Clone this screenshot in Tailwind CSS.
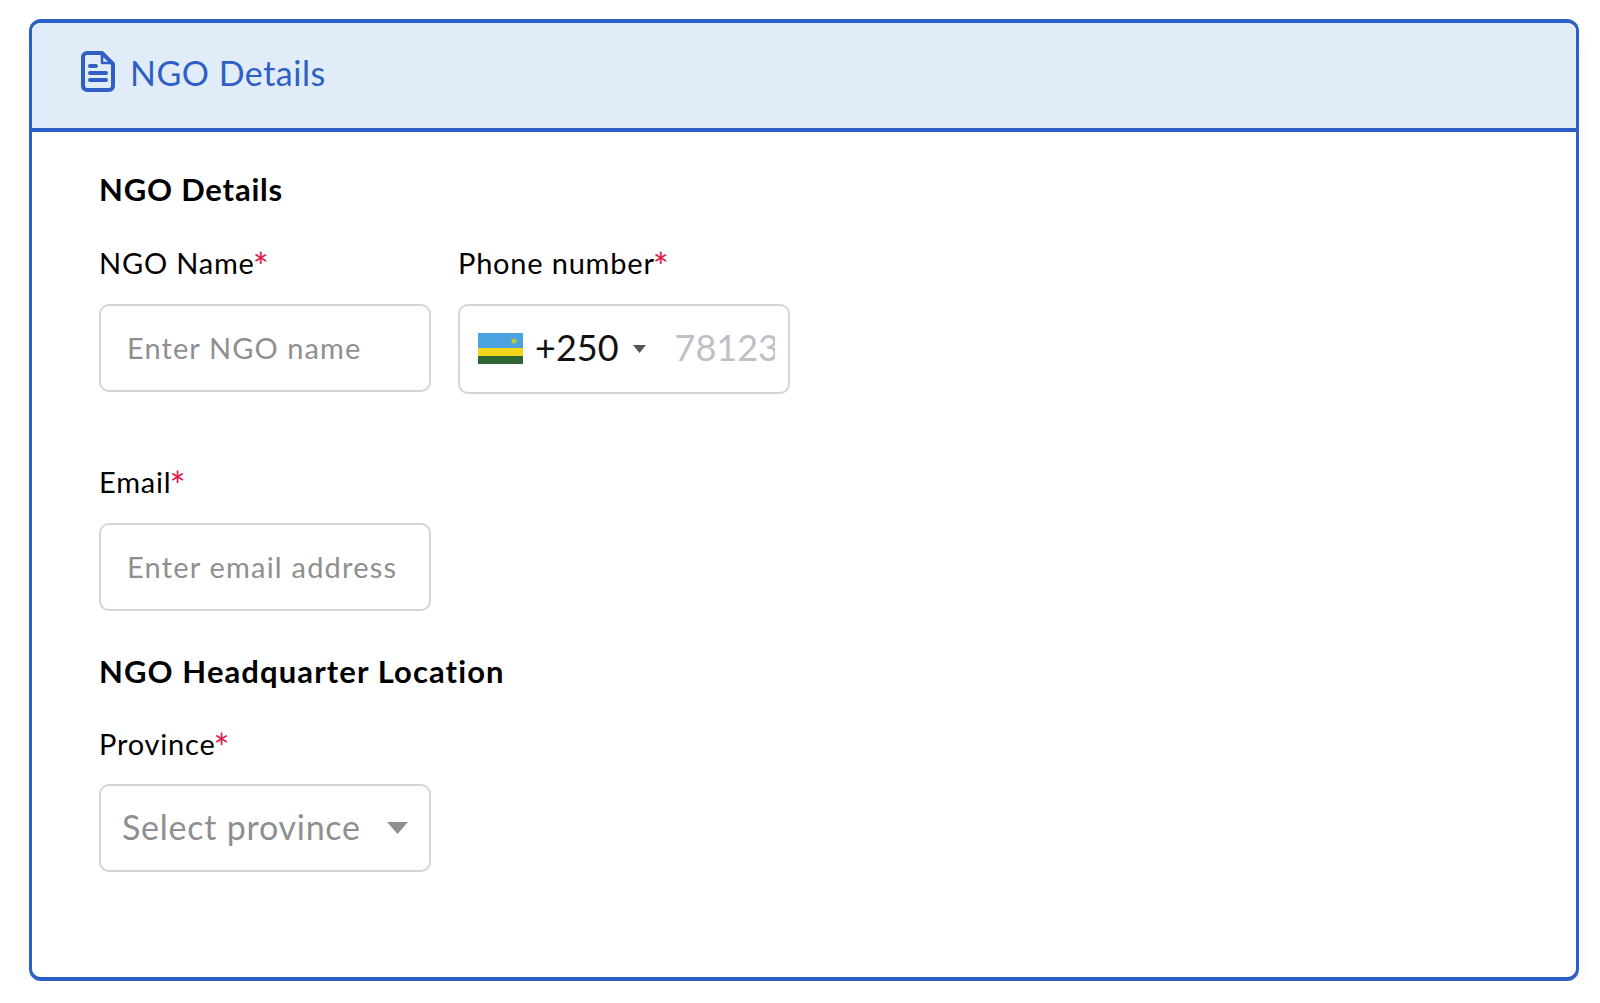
<!DOCTYPE html>
<html lang="en">

<head>
    <meta charset="UTF-8">
    <meta name="viewport" content="width=device-width, initial-scale=1.0">
    <title>NGO Details</title>
    <script src="https://cdn.jsdelivr.net/npm/@tailwindcss/browser@4"></script>
</head>

<body class="bg-white font-['Lato',sans-serif] text-black">
    <div class="pt-[19px] pl-[29px]">
        <div class="w-[1550px] h-[962px] border-x-[3px] border-y-[4px] border-[#2a5fc4] rounded-[12px] overflow-hidden bg-white shadow-[0_12px_24px_-6px_rgba(0,0,0,0.08)]">
            <!-- header -->
            <div class="h-[109px] bg-[#e1ecf9] border-b-[4px] border-[#2a5fc4] flex items-center pl-[49px] pb-[5px] gap-[15px] text-[#2f5fc4]">
                <svg class="w-[34px] h-[41px] mb-[3px]" viewBox="0 0 34 41" fill="none" stroke="currentColor" stroke-width="4" stroke-linejoin="round" stroke-linecap="round">
                    <path d="M6 2h15l11 11v22a4 4 0 0 1-4 4H6a4 4 0 0 1-4-4V6a4 4 0 0 1 4-4z" />
                    <path d="M21 3v9h10" stroke-width="2.6" />
                    <path d="M9 15h6M9 22h16M9 29h16" />
                </svg>
                <span class="text-[34px] leading-none tracking-[0.5px]">NGO Details</span>
            </div>

            <!-- form body -->
            <div class="pl-[67px]">
                <h2 class="mt-[39px] text-[31px] leading-[36px] font-bold tracking-[0.8px]">NGO Details</h2>

                <div class="mt-[38px] flex gap-[27px]">
                    <div class="w-[332px]">
                        <label class="block h-[36px] text-[29px] leading-[36px] tracking-[0.8px]">NGO Name<span class="-ml-[2px] text-[38px] leading-none align-[-7px] text-[#dc1f4e]">*</span></label>
                        <div class="mt-[23px] h-[88px] border-2 border-[#d3d5d8] rounded-[10px] flex items-center pl-[26px] pb-[1px] text-[29px] tracking-[1.1px] text-[#8f8f8f]">Enter NGO name</div>
                    </div>
                    <div class="w-[332px]">
                        <label class="block h-[36px] text-[29px] leading-[35px] tracking-[0.8px]">Phone number<span class="-ml-[2px] text-[38px] leading-none align-[-7px] text-[#dc1f4e]">*</span></label>
                        <div class="mt-[23px] h-[90px] border-2 border-[#d3d5d8] rounded-[10px] flex items-center pl-[18px] pr-[12px] overflow-hidden">
                            <svg class="w-[45px] h-[31px] shrink-0 mb-[2px]" viewBox="0 0 45 31">
                                <rect width="45" height="16" fill="#4aa3e0" />
                                <rect y="15" width="45" height="8" fill="#f2d51a" />
                                <rect y="23" width="45" height="8" fill="#2f6535" />
                                <circle cx="36" cy="8" r="2.6" fill="#b5c93a" />
                            </svg>
                            <span class="ml-[12px] pb-[4px] text-[36px] leading-none text-[#111]">+250</span>
                            <svg class="ml-[14px] w-[13px] h-[8px] shrink-0" viewBox="0 0 13 8"><path d="M0 0h13L6.5 8z" fill="#555" /></svg>
                            <span class="ml-[29px] pb-[4px] w-[100px] overflow-hidden text-[36px] leading-none text-[#bdc1c5]">78123</span>
                        </div>
                    </div>
                </div>

                <div class="mt-[70px] w-[332px]">
                    <label class="block h-[36px] text-[29px] leading-[36px] tracking-[0.8px]">Email<span class="-ml-[2px] text-[38px] leading-none align-[-7px] text-[#dc1f4e]">*</span></label>
                    <div class="mt-[23px] h-[88px] border-2 border-[#d3d5d8] rounded-[10px] flex items-center pl-[26px] pb-[1px] text-[29px] tracking-[1.2px] text-[#8f8f8f]">Enter email address</div>
                </div>

                <h2 class="mt-[42px] text-[31px] leading-[36px] font-bold tracking-[1.1px]">NGO Headquarter Location</h2>

                <div class="mt-[37px] w-[332px]">
                    <label class="block h-[36px] text-[29px] leading-[35px] tracking-[0.8px]">Province<span class="-ml-[2px] text-[38px] leading-none align-[-7px] text-[#dc1f4e]">*</span></label>
                    <div class="mt-[22px] h-[88px] border-2 border-[#d3d5d8] rounded-[10px] flex items-center justify-between pl-[21px] pr-[21px] text-[34px] tracking-[0.75px] text-[#8f8f8f]">
                        <span class="pb-[4px]">Select province</span>
                        <svg class="w-[21px] h-[12px]" viewBox="0 0 21 12"><path d="M0 0h21L10.5 12z" fill="#8f8f8f" /></svg>
                    </div>
                </div>
            </div>
        </div>
    </div>
</body>

</html>
